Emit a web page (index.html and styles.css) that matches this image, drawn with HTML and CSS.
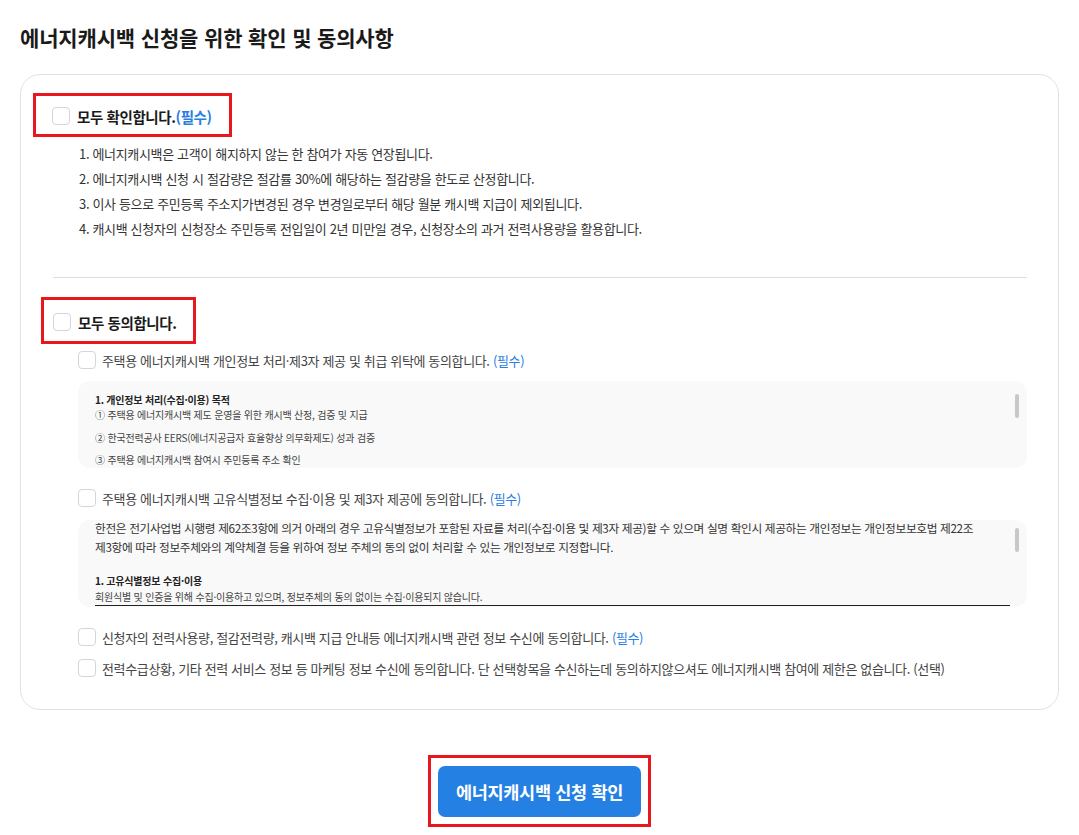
FILE: index.html
```html
<!DOCTYPE html>
<html lang="ko">
<head>
<meta charset="utf-8">
<title>에너지캐시백 신청을 위한 확인 및 동의사항</title>
<link rel="stylesheet" href="styles.css">
</head>
<body>
<main class="page">
  <h1 class="title">에너지캐시백 신청을 위한 확인 및 동의사항</h1>
  <section class="card">
    <div class="all-row all-confirm">
      <span class="chk"></span>
      <span class="all-label">모두 확인합니다.<span class="req-b">(필수)</span></span>
    </div>
    <ol class="notice">
      <li>1. 에너지캐시백은 고객이 해지하지 않는 한 참여가 자동 연장됩니다.</li>
      <li>2. 에너지캐시백 신청 시 절감량은 절감률 30%에 해당하는 절감량을 한도로 산정합니다.</li>
      <li>3. 이사 등으로 주민등록 주소지가변경된 경우 변경일로부터 해당 월분 캐시백 지급이 제외됩니다.</li>
      <li>4. 캐시백 신청자의 신청장소 주민등록 전입일이 2년 미만일 경우, 신청장소의 과거 전력사용량을 활용합니다.</li>
    </ol>
    <hr class="sep">
    <div class="all-row all-agree">
      <span class="chk"></span>
      <span class="all-label">모두 동의합니다.</span>
    </div>
    <div class="items">
      <div class="item item-1">
        <span class="chk"></span>
        <span class="item-label">주택용 에너지캐시백 개인정보 처리·제3자 제공 및 취급 위탁에 동의합니다. <span class="req">(필수)</span></span>
      </div>
      <div class="terms terms-1">
        <div class="terms-body">
          <p class="t-head">1. 개인정보 처리(수집·이용) 목적</p>
          <p class="t-line">① 주택용 에너지캐시백 제도 운영을 위한 캐시백 산정, 검증 및 지급</p>
          <p class="t-line">② 한국전력공사 EERS(에너지공급자 효율향상 의무화제도) 성과 검증</p>
          <p class="t-line">③ 주택용 에너지캐시백 참여시 주민등록 주소 확인</p>
        </div>
        <span class="thumb"></span>
      </div>
      <div class="item item-2">
        <span class="chk"></span>
        <span class="item-label">주택용 에너지캐시백 고유식별정보 수집·이용 및 제3자 제공에 동의합니다. <span class="req">(필수)</span></span>
      </div>
      <div class="terms terms-2">
        <div class="terms-body">
          <p class="t-intro">한전은 전기사업법 시행령 제62조3항에 의거 아래의 경우 고유식별정보가 포함된 자료를 처리(수집·이용 및 제3자 제공)할 수 있으며 실명 확인시 제공하는 개인정보는 개인정보보호법 제22조<br>제3항에 따라 정보주체와의 계약체결 등을 위하여 정보 주체의 동의 없이 처리할 수 있는 개인정보로 지정합니다.</p>
          <p class="t-head t-head-2">1. 고유식별정보 수집·이용</p>
          <p class="t-sub">회원식별 및 인증을 위해 수집·이용하고 있으며, 정보주체의 동의 없이는 수집·이용되지 않습니다.</p>
          <div class="t-table"></div>
        </div>
        <span class="thumb"></span>
      </div>
      <div class="item item-3">
        <span class="chk"></span>
        <span class="item-label">신청자의 전력사용량, 절감전력량, 캐시백 지급 안내등 에너지캐시백 관련 정보 수신에 동의합니다. <span class="req">(필수)</span></span>
      </div>
      <div class="item item-4">
        <span class="chk"></span>
        <span class="item-label">전력수급상황, 기타 전력 서비스 정보 등 마케팅 정보 수신에 동의합니다. 단 선택항목을 수신하는데 동의하지않으셔도 에너지캐시백 참여에 제한은 없습니다. (선택)</span>
      </div>
    </div>
  </section>
  <div class="actions">
    <div class="submit-mark">
      <button class="submit" type="button">에너지캐시백 신청 확인</button>
    </div>
  </div>
</main>
</body>
</html>
```
FILE: styles.css
```css
*, *::before, *::after { box-sizing: border-box; }
html, body { margin: 0; padding: 0; background: #fff; }
body {
  font-family: "Noto Sans CJK KR", "Noto Sans", sans-serif;
  color: #222;
}
.page {
  padding: 22px 20px 0 20px;
}
.title {
  margin: 0;
  font-size: 21px;
  line-height: 30px;
  font-weight: 700;
  color: #1a1a1a;
  letter-spacing: -0.15px;
}
.card {
  margin-top: 22px;
  border: 1px solid #e2e2e2;
  border-radius: 20px;
  padding: 29px 31px 29px 32px;
}
.chk {
  flex: none;
  width: 18px;
  height: 18px;
  border: 1px solid #d6d6d6;
  border-radius: 4px;
  background: #fff;
}
.all-row {
  position: relative;
  display: flex;
  align-items: center;
  gap: 7px;
  height: 24px;
}
.all-confirm { margin-left: -1px; }
.all-label {
  font-size: 14.5px;
  font-weight: 700;
  color: #1a1a1a;
  letter-spacing: -0.4px;
}
.req-b { color: #2a7ee2; }
.all-row::after {
  content: "";
  position: absolute;
  border: 3px solid #e8161d;
  pointer-events: none;
}
.all-confirm::after { left: -19px; top: -11px; width: 199px; height: 44px; }
.all-agree::after { left: -12px; top: -13px; width: 155px; height: 47px; }

.notice {
  list-style: none;
  margin: 13px 0 0 26px;
  padding: 0;
}
.notice li {
  font-size: 13px;
  line-height: 25px;
  color: #333;
  letter-spacing: -0.34px;
}
.sep {
  margin: 36px 0 0 0;
  border: 0;
  border-top: 1px solid #dedede;
  height: 0;
}
.all-agree { margin-top: 32px; }

.items { margin-left: 25px; }
.item {
  display: flex;
  align-items: center;
  gap: 6px;
  height: 24px;
}
.item-label {
  font-size: 13px;
  color: #444;
  letter-spacing: -0.36px;
  white-space: nowrap;
}
.req { color: #2a7ee2; }
.item-1 { margin-top: 14px; }
.item-2 { margin-top: 18px; }
.item-3 { margin-top: 18px; }
.item-4 { margin-top: 7px; }

.terms {
  position: relative;
  height: 87px;
  background: #f9f9f9;
  border-radius: 12px;
  overflow: hidden;
}
.terms-1 { margin-top: 9px; }
.terms-2 { margin-top: 10px; }
.terms-body {
  padding: 0 17px 0 17px;
}
.terms-1 .terms-body { padding-top: 11px; }
.terms p { margin: 0; }
.t-head {
  font-size: 10px;
  line-height: 15px;
  font-weight: 700;
  color: #222;
  letter-spacing: -0.2px;
}
.t-line {
  font-size: 10px;
  line-height: 15px;
  color: #444;
  letter-spacing: -0.2px;
}
.t-line + .t-line { margin-top: 7.5px; }
.terms .t-intro {
  margin-top: -2px;
  font-size: 11.7px;
  line-height: 19px;
  color: #333;
  letter-spacing: -0.35px;
  white-space: nowrap;
}
.terms .t-head-2 { margin-top: 17px; }
.t-sub {
  font-size: 10px;
  line-height: 17px;
  color: #444;
  letter-spacing: -0.2px;
}
.t-table {
  border-top: 1px solid #222;
  width: 915px;
}
.thumb {
  position: absolute;
  right: 8px;
  top: 13px;
  width: 4px;
  height: 24px;
  border-radius: 2px;
  background: #c8c8c8;
}
.terms-2 .thumb { top: 8px; }

.actions {
  display: flex;
  justify-content: center;
  margin-top: 45px;
}
.submit-mark {
  border: 3px solid #e8161d;
  padding: 8px 7px 7px 7px;
}
.submit {
  display: block;
  width: 203px;
  height: 51px;
  border: 0;
  border-radius: 7px;
  background: #2580e3;
  color: #fff;
  font-family: "Noto Sans CJK KR", "Noto Sans", sans-serif;
  font-size: 17.5px;
  font-weight: 700;
  letter-spacing: -0.3px;
}
```
